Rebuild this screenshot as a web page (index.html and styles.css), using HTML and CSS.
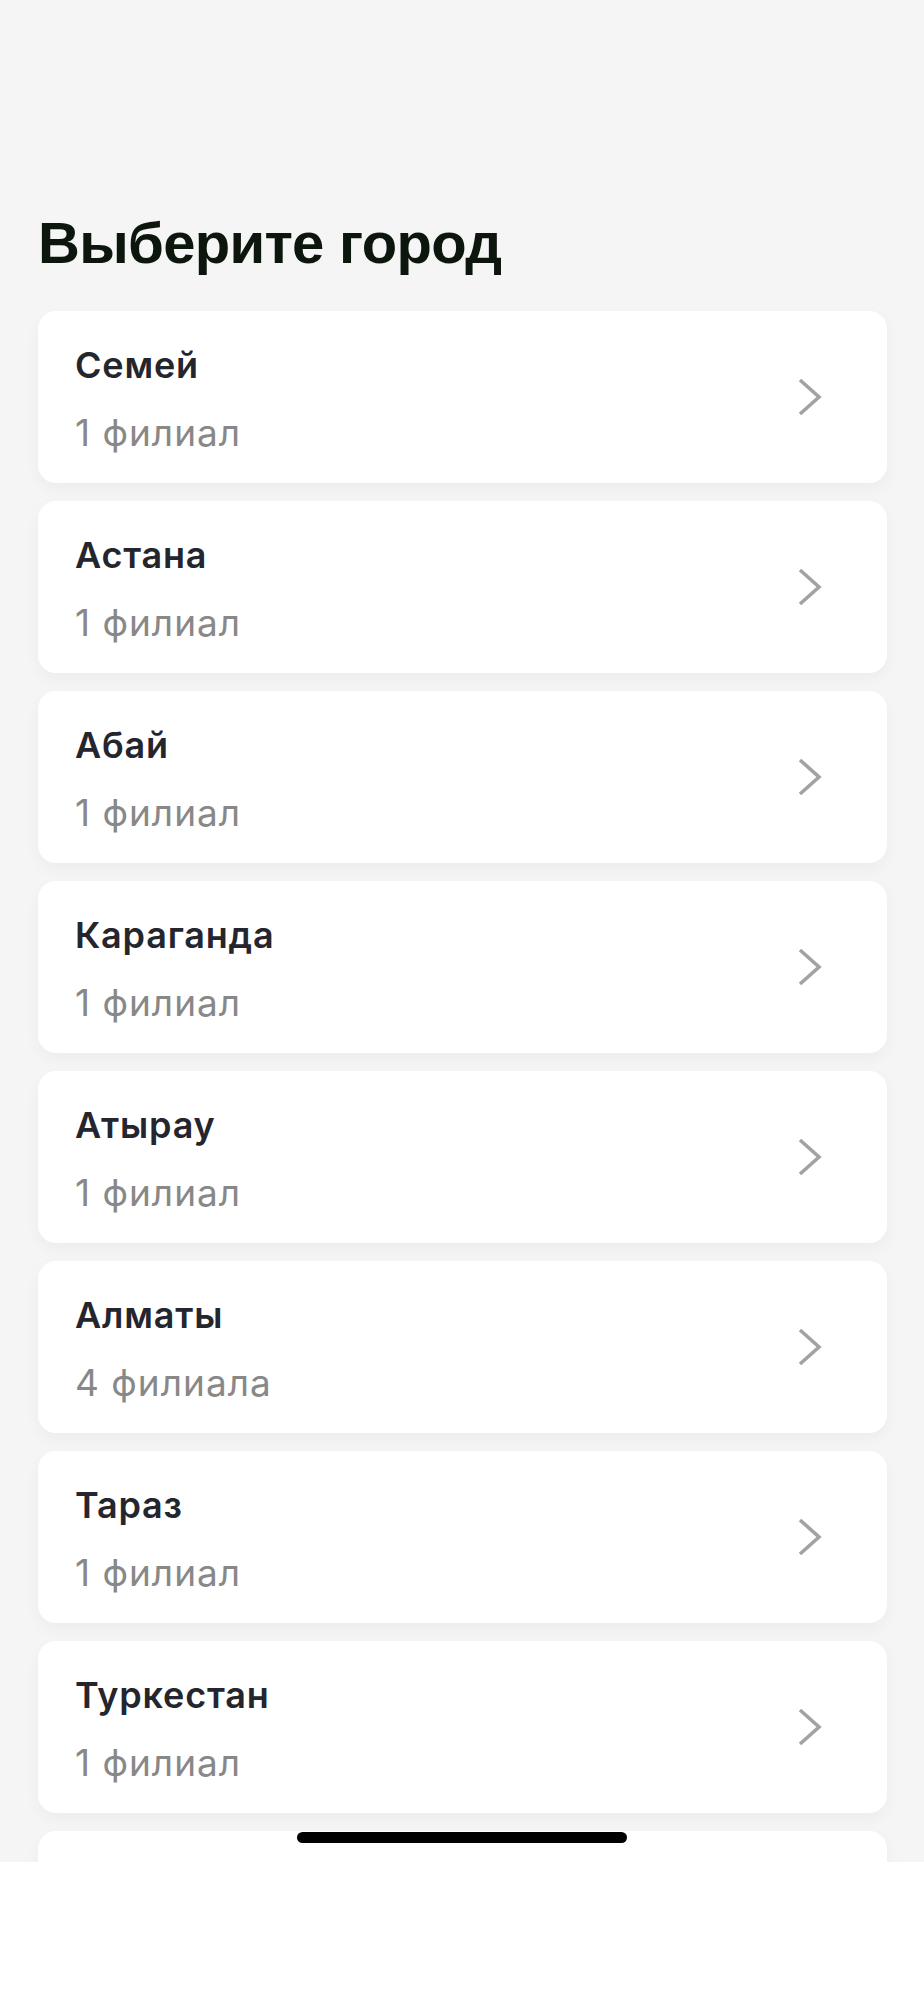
FILE: index.html
```html
<!DOCTYPE html>
<html lang="ru">
<head>
    <meta charset="UTF-8">
    <meta name="viewport" content="width=device-width, initial-scale=1.0">
    <title>Выберите город</title>
    <link rel="stylesheet" href="styles.css">
</head>
<body>

    <div class="screen">
        <h1>Выберите город</h1>

        <div class="city-list">
            <div class="city-card">
                <div class="city-info">
                    <div class="city-name">Семей</div>
                    <div class="city-count">1 филиал</div>
                </div>
                <svg class="chevron" viewBox="0 0 26 40"><polyline points="3,3 22,20 3,37"/></svg>
            </div>
            <div class="city-card">
                <div class="city-info">
                    <div class="city-name">Астана</div>
                    <div class="city-count">1 филиал</div>
                </div>
                <svg class="chevron" viewBox="0 0 26 40"><polyline points="3,3 22,20 3,37"/></svg>
            </div>
            <div class="city-card">
                <div class="city-info">
                    <div class="city-name">Абай</div>
                    <div class="city-count">1 филиал</div>
                </div>
                <svg class="chevron" viewBox="0 0 26 40"><polyline points="3,3 22,20 3,37"/></svg>
            </div>
            <div class="city-card">
                <div class="city-info">
                    <div class="city-name">Караганда</div>
                    <div class="city-count">1 филиал</div>
                </div>
                <svg class="chevron" viewBox="0 0 26 40"><polyline points="3,3 22,20 3,37"/></svg>
            </div>
            <div class="city-card">
                <div class="city-info">
                    <div class="city-name">Атырау</div>
                    <div class="city-count">1 филиал</div>
                </div>
                <svg class="chevron" viewBox="0 0 26 40"><polyline points="3,3 22,20 3,37"/></svg>
            </div>
            <div class="city-card">
                <div class="city-info">
                    <div class="city-name">Алматы</div>
                    <div class="city-count">4 филиала</div>
                </div>
                <svg class="chevron" viewBox="0 0 26 40"><polyline points="3,3 22,20 3,37"/></svg>
            </div>
            <div class="city-card">
                <div class="city-info">
                    <div class="city-name">Тараз</div>
                    <div class="city-count">1 филиал</div>
                </div>
                <svg class="chevron" viewBox="0 0 26 40"><polyline points="3,3 22,20 3,37"/></svg>
            </div>
            <div class="city-card">
                <div class="city-info">
                    <div class="city-name">Туркестан</div>
                    <div class="city-count">1 филиал</div>
                </div>
                <svg class="chevron" viewBox="0 0 26 40"><polyline points="3,3 22,20 3,37"/></svg>
            </div>
            <div class="city-card city-card-empty"></div>
        </div>

        <div class="home-indicator"></div>
    </div>

</body>
</html>
```

FILE: styles.css
```css
body {
    margin: 0;
    padding: 0;
    background-color: #fff;
    font-family: Inter, "Noto Sans", sans-serif;
}
.screen {
    position: relative;
    height: 1862px;
    overflow: hidden;
    padding: 210px 37px 0 38px;
    box-sizing: border-box;
    background-color: #f5f5f5;
}
h1 {
    margin: 0 0 35px 0;
    font-family: "Liberation Sans", Arial, sans-serif;
    font-size: 58px;
    line-height: 66px;
    font-weight: bold;
    color: #0c160c;
    letter-spacing: -0.7px;
}
.city-list {
    display: flex;
    flex-direction: column;
    gap: 18px;
}
.city-card {
    display: flex;
    align-items: center;
    justify-content: space-between;
    padding: 32px 64px 28px 37px;
    background-color: #fff;
    border-radius: 18px;
    box-shadow: 0px 6px 16px rgba(0, 0, 0, 0.04);
}
.city-card-empty {
    height: 172px;
    box-sizing: border-box;
}
.city-name {
    font-size: 36px;
    line-height: 44px;
    font-weight: 600;
    color: #25262d;
    letter-spacing: 0.8px;
}
.city-count {
    margin-top: 24px;
    font-size: 37px;
    line-height: 44px;
    font-weight: 400;
    color: #888;
    letter-spacing: 1px;
}
.chevron {
    width: 26px;
    height: 40px;
    margin-top: -4px;
    fill: none;
    stroke: #a2a2a2;
    stroke-width: 3.6;
}
.home-indicator {
    position: absolute;
    top: 1832px;
    left: 50%;
    width: 330px;
    height: 11px;
    margin-left: -165px;
    border-radius: 6px;
    background-color: #000;
}
```
